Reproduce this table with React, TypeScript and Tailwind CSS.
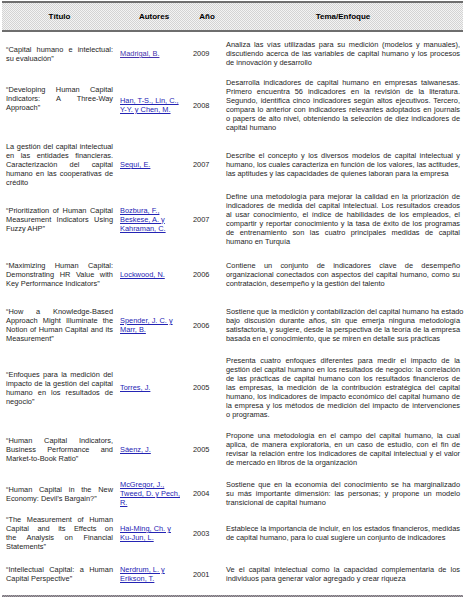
import React from "react";

type Row = {
  pt: string;
  title: string[];
  titleCls?: string;
  authors: string[];
  authorCls?: string;
  year: string;
  tema: string[];
};

const rows: Row[] = [
  {
    pt: "pt-[8px]",
    title: ["“Capital humano e intelectual:", "su evaluación”"],
    authors: ["Madrigal, B."],
    authorCls: "text-[#4634ad] decoration-[#4634ad]",
    year: "2009",
    tema: [
      "Analiza las vías utilizadas para su medición (modelos y manuales),",
      "discutiendo acerca de las variables de capital humano y los procesos",
      "de innovación y desarrollo",
    ],
  },
  {
    pt: "pt-[11px]",
    title: ["“Developing Human Capital", "Indicators: A Three-Way", "Approach”"],
    titleCls: "pb-[14px]",
    authors: ["Han, T-S., Lin, C.,", "Y-Y. y Chen, M."],
    year: "2008",
    tema: [
      "Desarrolla indicadores de capital humano en empresas taiwanesas.",
      "Primero encuentra 56 indicadores en la revisión de la literatura.",
      "Segundo, identifica cinco indicadores según altos ejecutivos. Tercero,",
      "compara lo anterior con indicadores relevantes adoptados en journals",
      "o papers de alto nivel, obteniendo la selección de diez indicadores de",
      "capital humano",
    ],
  },
  {
    pt: "pt-[10px]",
    title: [
      "La gestión del capital intelectual",
      "en las entidades financieras.",
      "Caracterización del capital",
      "humano en las cooperativas de",
      "crédito",
    ],
    authors: ["Seguí, E."],
    year: "2007",
    tema: [
      "Describe el concepto y los diversos modelos de capital intelectual y",
      "humano, los cuales caracteriza en función de los valores, las actitudes,",
      "las aptitudes y las capacidades de quienes laboran para la empresa",
    ],
  },
  {
    pt: "pt-[5px]",
    title: ["“Prioritization of Human Capital", "Measurement Indicators Using", "Fuzzy AHP”"],
    authors: ["Bozbura, F.,", "Beskese, A. y", "Kahraman, C."],
    year: "2007",
    tema: [
      "Define una metodología para mejorar la calidad en la priorización de",
      "indicadores de medida del capital intelectual. Los resultados creados",
      "al usar conocimiento, el índice de habilidades de los empleados, el",
      "compartir y reportar conocimiento y la tasa de éxito de los programas",
      "de entrenamiento son las cuatro principales medidas de capital",
      "humano en Turquía",
    ],
  },
  {
    pt: "pt-[15px]",
    title: ["“Maximizing Human Capital:", "Demonstrating HR Value with", "Key Performance Indicators”"],
    authors: ["Lockwood, N."],
    year: "2006",
    tema: [
      "Contiene un conjunto de indicadores clave de desempeño",
      "organizacional conectados con aspectos del capital humano, como su",
      "contratación, desempeño y la gestión del talento",
    ],
  },
  {
    pt: "pt-[19px]",
    title: [
      "“How a Knowledge-Based",
      "Approach Might Illuminate the",
      "Notion of Human Capital and its",
      "Measurement”",
    ],
    authors: ["Spender, J. C. y", "Marr, B."],
    year: "2006",
    tema: [
      "Sostiene que la medición y contabilización del capital humano ha estado",
      "bajo discusión durante años, sin que emerja ninguna metodología",
      "satisfactoria, y sugiere, desde la perspectiva de la teoría de la empresa",
      "basada en el conocimiento, que se miren en detalle sus prácticas",
    ],
  },
  {
    pt: "pt-[13px]",
    title: [
      "“Enfoques para la medición del",
      "impacto de la gestión del capital",
      "humano en los resultados de",
      "negocio”",
    ],
    authors: ["Torres, J."],
    year: "2005",
    tema: [
      "Presenta cuatro enfoques diferentes para medir el impacto de la",
      "gestión del capital humano en los resultados de negocio: la correlación",
      "de las prácticas de capital humano con los resultados financieros de",
      "las empresas, la medición de la contribución estratégica del capital",
      "humano, los indicadores de impacto económico del capital humano de",
      "la empresa y los métodos de medición del impacto de intervenciones",
      "o programas.",
    ],
  },
  {
    pt: "pt-[12px]",
    title: ["“Human Capital Indicators,", "Business Performance and", "Market-to-Book Ratio”"],
    authors: ["Sáenz, J."],
    year: "2005",
    tema: [
      "Propone una metodología en el campo del capital humano, la cual",
      "aplica, de manera exploratoria, en un caso de estudio, con el fin de",
      "revisar la relación entre los indicadores de capital intelectual y el valor",
      "de mercado en libros de la organización",
    ],
  },
  {
    pt: "pt-[13px]",
    title: ["“Human Capital in the New", "Economy: Devil’s Bargain?”"],
    authors: ["McGregor, J.,", "Tweed, D. y Pech,", "R."],
    year: "2004",
    tema: [
      "Sostiene que en la economía del conocimiento se ha marginalizado",
      "su más importante dimensión: las personas; y propone un modelo",
      "transicional de capital humano",
    ],
  },
  {
    pt: "pt-[8px]",
    title: [
      "“The Measurement of Human",
      "Capital and its Effects on",
      "the Analysis on Financial",
      "Statements”",
    ],
    authors: ["Hai-Ming, Ch. y", "Ku-Jun, L."],
    year: "2003",
    tema: [
      "Establece la importancia de incluir, en los estados financieros, medidas",
      "de capital humano, para lo cual sugiere un conjunto de indicadores",
    ],
  },
  {
    pt: "pt-[14px]",
    title: ["“Intellectual Capital: a Human", "Capital Perspective”"],
    authors: ["Nerdrum, L. y", "Erikson, T."],
    year: "2001",
    tema: [
      "Ve el capital intelectual como la capacidad complementaria de los",
      "individuos para generar valor agregado y crear riqueza",
    ],
  },
];

// one div per line so the breaks match the scan; all but the last are stretched
const Justified = ({ lines }: { lines: string[] }) => (
  <div>
    {lines.map((line, i) =>
      i < lines.length - 1 ? (
        <div key={i} className="whitespace-nowrap text-justify [text-align-last:justify]">
          {line}
        </div>
      ) : (
        <div key={i} className="whitespace-nowrap text-left">
          {line}
        </div>
      )
    )}
  </div>
);

export default function App() {
  return (
    <div className="w-[465px] h-[600px] bg-white pt-[1px] font-['Liberation_Sans',Arial,sans-serif] text-[#1e1e1e]">
      <div className="mx-[2px] h-[2px] bg-[#6e6e6e]" />
      <div className="mx-[2px] h-[27px] pl-[4px] grid grid-cols-[107px_75px_38px_234px] items-center bg-[repeating-conic-gradient(#d3d3d3_0%_25%,#f3f3f3_0%_50%)] bg-[length:2px_2px] text-[8px] font-bold text-black">
        <div className="text-center">Título</div>
        <div className="text-center pl-[7px]">Autores</div>
        <div className="text-center">Año</div>
        <div className="text-center">Tema/Enfoque</div>
      </div>
      <div className="mx-[2px] h-[2px] bg-[#6e6e6e]" />

      <div className="pl-[6px] text-[7.4px] leading-[9px]">
        {rows.map((row, i) => (
          <div key={i} className={`grid grid-cols-[107px_75px_38px_234px] items-center ${row.pt}`}>
            <div className={row.titleCls ?? ""}>
              <Justified lines={row.title} />
            </div>
            <div className="pl-[7px]">
              {row.authors.map((a, j) => (
                <div key={j} className="whitespace-nowrap">
                  <span
                    className={`underline underline-offset-[1px] ${
                      row.authorCls ?? "text-[#2424b4] decoration-[#2424b4]"
                    }`}
                  >
                    {a}
                  </span>
                </div>
              ))}
            </div>
            <div className="pl-[5px]">{row.year}</div>
            <div>
              <Justified lines={row.tema} />
            </div>
          </div>
        ))}
      </div>

      <div className="mt-[12px] mx-[2px] h-[2px] bg-[repeating-conic-gradient(#7a7a7a_0%_25%,#a49aa8_0%_50%)] bg-[length:2px_2px]" />
    </div>
  );
}
